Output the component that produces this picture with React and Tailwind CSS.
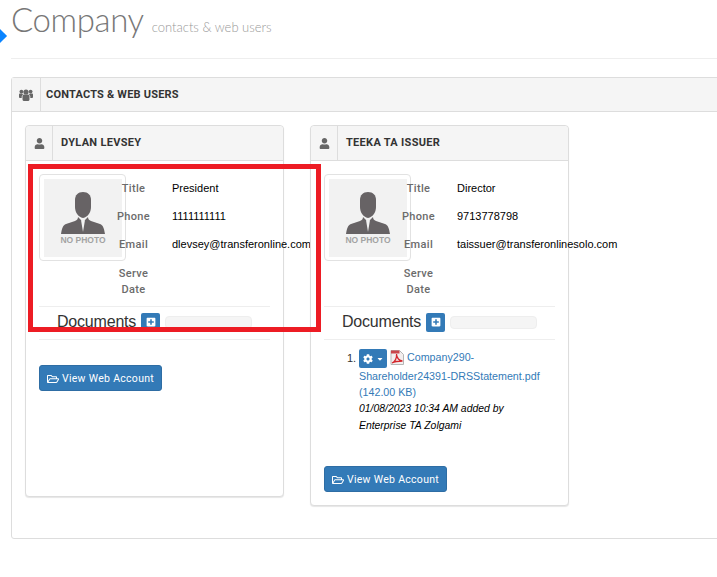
import React from 'react';
import { FaUser, FaRegFolderOpen, FaCog, FaPlusSquare, FaCaretDown } from 'react-icons/fa';

const NoPhoto = () => (
  <div className="w-[87px] h-[87px] shrink-0 border border-[#e2e2e2] rounded-[4px] bg-white p-[4px]">
    <div className="h-[78px] w-[78px] bg-[#f2f2f2] flex flex-col items-center pt-[13px]">
      <svg width="44" height="42" viewBox="0 0 44 42" className="block">
        <path d="M22 0c-5 0-8 3-8 8v7c0 5 3 10 8 11 5-1 8-6 8-11V8c0-5-3-8-8-8z" fill="#676365" />
        <path d="M17 25c0 2-1 3-3 4l-9 3c-3 1-4 4-5 10h44c-1-6-2-9-5-10l-9-3c-2-1-3-2-3-4l-5 5-5-5z" fill="#676365" />
        <path d="M20 28l2 12 2-12-2 1z" fill="#f2f2f2" />
      </svg>
      <div className="text-[8.5px] leading-[10px] font-bold text-[#a3a3a3] mt-[1px] whitespace-nowrap">NO PHOTO</div>
    </div>
  </div>
);

const UsersIcon = () => (
  <svg width="14" height="12" viewBox="0 0 14 12" fill="#666" className="block">
    <circle cx="7" cy="3" r="2.6" />
    <circle cx="2.4" cy="2.6" r="1.9" />
    <circle cx="11.600" cy="2.6" r="1.9" />
    <path d="M3.500 7c0-1 1-1.500 2-1.500h3c1 0 2 .5 2 1.500v3.500c0 1-1 1.500-2 1.500h-3c-1 0-2-.5-2-1.500z" />
    <path d="M0 5.500c0-.5.500-1 1-1h2.200c.3.500.6 1 1 1.300-1 .4-1.500 1-1.500 2V9H1c-.5 0-1-.5-1-1z" />
    <path d="M14 5.500c0-.5-.5-1-1-1h-2.200c-.3.500-.6 1-1 1.300 1 .4 1.500 1 1.500 2V9H13c.5 0 1-.5 1-1z" />
  </svg>
);

const Field = ({ label, value, tall }) => (
  <div className={`flex ${tall ? 'h-[32px] pt-[1px]' : 'h-[28px]'}`}>
    <div className="w-[47px] shrink-0 pt-[1px] text-center font-['Roboto',sans-serif] text-[#6b6b6b] font-medium tracking-[0.35px] leading-[16px]">{label}</div>
    <div className="ml-[15px] text-black whitespace-nowrap leading-[16px]">{value}</div>
  </div>
);

const PdfIcon = () => (
  <svg width="14" height="15" viewBox="0 0 14 15" className="inline-block align-[-4px] ml-[3px] mr-[3px]">
    <path d="M1 0.5h8.5l4 4v10H1z" fill="#f3eeee" stroke="#b5b5b5" />
    <path d="M1 0.5h8.5v3H1z" fill="#c9474b" />
    <path d="M2 13c3-1 5-5 4.5-9 0 4 3 7 6 7-3 0-7 0-10.500 2z" fill="none" stroke="#d3262c" strokeWidth="1.3" />
  </svg>
);

const ViewButton = () => (
  <div className="pb-[12px]">
    <button className="h-[26px] w-[123px] pt-[1px] bg-[#337ab7] border border-[#2e6da4] rounded-[3px] text-white font-['Roboto',sans-serif] text-[10.5px] tracking-[0.3px] flex items-center justify-center gap-[3px]">
      <FaRegFolderOpen className="text-[12px]" />
      View Web Account
    </button>
  </div>
);

const ContactCard = ({ name, title, phone, email, height, children }) => (
  <div className={`w-[259px] ${height} shrink-0 border border-[#ddd] rounded-[4px] bg-white shadow-[0_1px_1px_rgba(0,0,0,0.1)] flex flex-col`}>
    <div className="h-[35px] shrink-0 flex bg-[#f5f5f5] border-b border-[#ddd] rounded-t-[4px]">
      <div className="w-[27px] border-r border-[#ddd] flex items-center justify-center text-[#666] text-[11px]">
        <FaUser />
      </div>
      <div className="pl-[8px] flex items-center font-['Roboto',sans-serif] text-[11px] font-bold text-[#333] tracking-[0.3px]">{name}</div>
    </div>
    <div className="px-[13px] pt-[13px] flex-1 flex flex-col">
      <div className="flex h-[132px] text-[11px]">
        <NoPhoto />
        <div className="-ml-[16px] pt-[6px]">
          <Field label="Title" value={title} />
          <Field label="Phone" value={phone} />
          <Field label="Email" value={email} />
          <Field label="Serve Date" tall />
        </div>
      </div>
      <div className="border-t border-[#eee] h-[33px] flex items-center pl-[18px] pb-[2px]">
        <span className="text-[16px] text-[#333] tracking-[-0.2px]">Documents</span>
        <span className="ml-[5px] w-[19px] h-[19px] bg-[#337ab7] rounded-[2px] flex items-center justify-center text-white text-[10px]">
          <FaPlusSquare />
        </span>
        <span className="ml-[5px] w-[87px] h-[13px] bg-[#f5f5f5] border border-[#eee] rounded-[4px]" />
      </div>
      <div className="border-t border-[#eee]">{children}</div>
      <ViewButton />
    </div>
  </div>
);

export default function App() {
  return (
    <div className="relative w-[717px] h-[577px] overflow-hidden bg-white font-['Liberation_Sans',sans-serif]">
      {/* blue marker on the left edge */}
      <div className="absolute left-[-5px] top-[31px] w-[10px] h-[10px] rotate-45 bg-[#0a84ff]" />

      <div className="h-[59px] ml-[11px] border-b border-[#eee] flex items-baseline">
        <span className="font-['Lato',sans-serif] font-light text-[33px] leading-[39px] text-[#777] tracking-[-0.4px]">Company</span>
        <span className="font-['Lato',sans-serif] font-light text-[13px] text-[#999] ml-[8px]">contacts &amp; web users</span>
      </div>

      <div className="mt-[18px] ml-[11px] w-[720px] h-[462px] border border-[#ddd] rounded-[3px]">
        <div className="h-[34px] flex bg-[#f5f5f5] border-b border-[#ddd]">
          <div className="w-[29px] border-r border-[#ddd] flex items-center justify-center">
            <UsersIcon />
          </div>
          <div className="pl-[5px] pt-[1px] flex items-center font-['Roboto',sans-serif] text-[11px] font-bold text-[#333] tracking-[0.2px]">CONTACTS &amp; WEB USERS</div>
        </div>
        <div className="flex items-start gap-[26px] pl-[13px] pt-[13px]">
          <ContactCard
            name="DYLAN LEVSEY"
            title="President"
            phone="1111111111"
            email="dlevsey@transferonline.com"
            height="h-[372px]"
          >
            <div className="h-[25px]" />
          </ContactCard>
          <ContactCard
            name="TEEKA TA ISSUER"
            title="Director"
            phone="9713778798"
            email="taissuer@transferonlinesolo.com"
            height="h-[381px]"
          >
            <ol className="pl-[35px] pr-[8px] pt-[9px] pb-[32px] text-[10.7px] leading-[16px]">
              <li className="relative">
                <span className="absolute left-[-12px] top-[1px] text-[11px] text-[#333]">1.</span>
                <span className="inline-flex align-middle items-center justify-center gap-[3px] w-[28px] h-[19px] bg-[#337ab7] rounded-[2px] text-white text-[10px]">
                  <FaCog />
                  <FaCaretDown className="text-[8px]" />
                </span>
                <PdfIcon />
                <a className="text-[#337ab7]">Company290-<br />Shareholder24391-DRSStatement.pdf (142.00 KB)</a>
                <div className="italic text-black text-[10.4px] leading-[17px]">01/08/2023 10:34 AM added by Enterprise TA Zolgami</div>
              </li>
            </ol>
          </ContactCard>
        </div>
      </div>

      {/* red highlight drawn over the first card */}
      <div className="absolute left-[28px] top-[164px] w-[293px] h-[168px] border-[5px] border-[#ed1c24]" />
    </div>
  );
}
